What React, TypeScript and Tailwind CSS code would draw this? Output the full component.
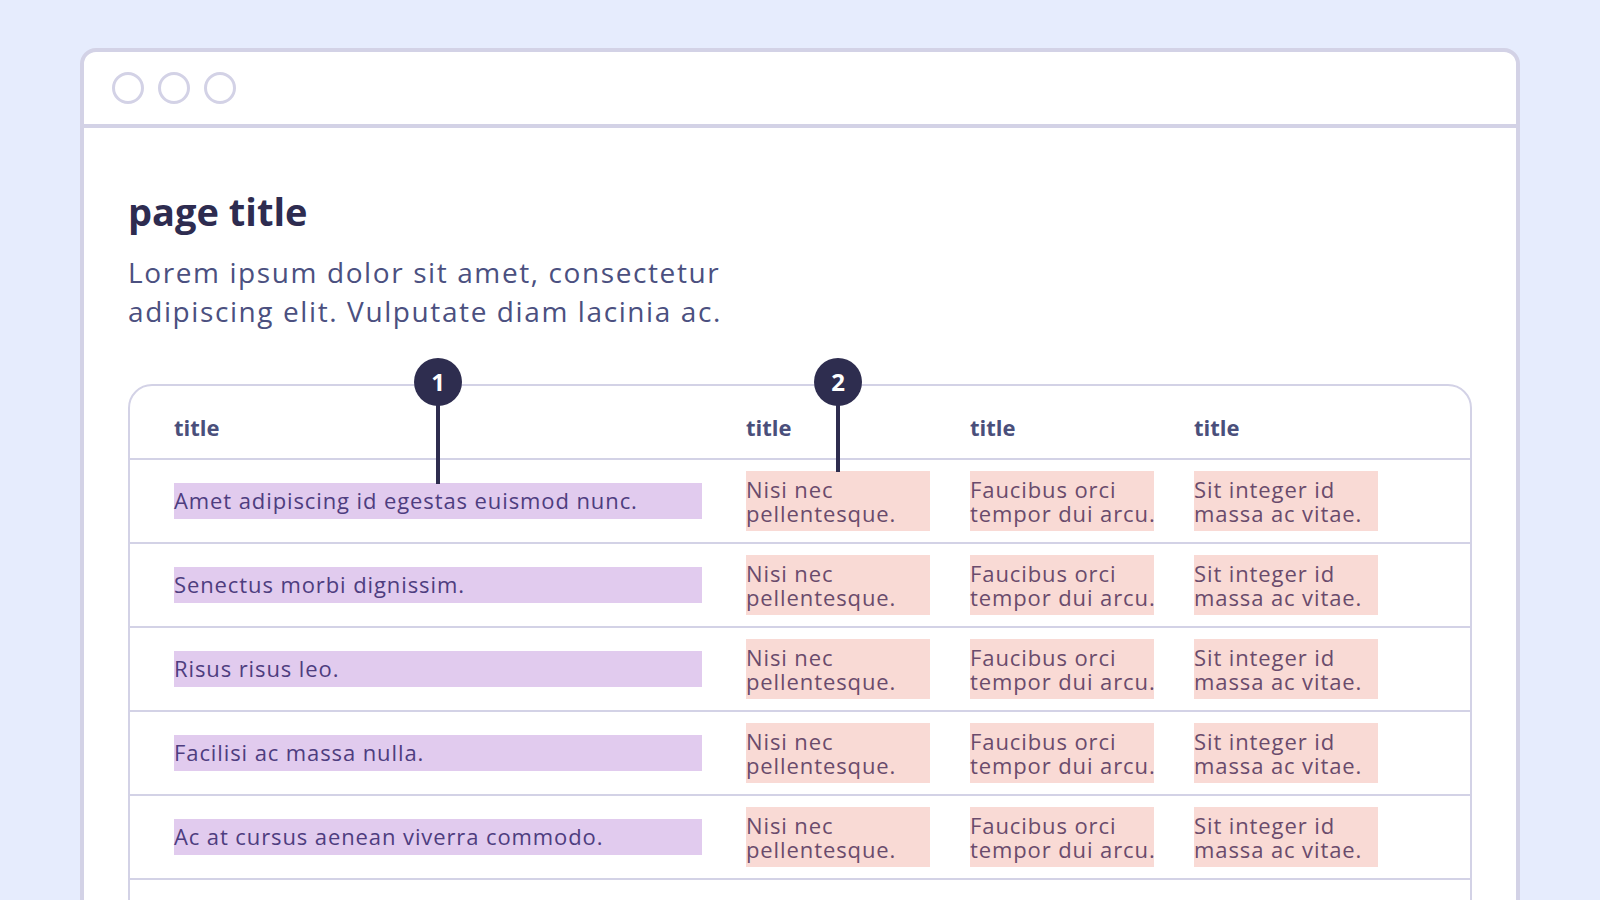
import React from "react";

const rows = [
  "Amet adipiscing id egestas euismod nunc.",
  "Senectus morbi dignissim.",
  "Risus risus leo.",
  "Facilisi ac massa nulla.",
  "Ac at cursus aenean viverra commodo.",
];

function Badge({ n, line }: { n: string; line: "long" | "short" }) {
  return (
    <div className="absolute left-1/2 -translate-x-1/2 top-[-28px] w-[48px] flex flex-col items-center z-10">
      <div className="w-[48px] h-[48px] rounded-full bg-[#2e2d4f] flex items-center justify-center text-white text-[24px] font-bold leading-none">
        {n}
      </div>
      <div
        className={
          line === "long"
            ? "w-[4px] h-[80px] bg-[#2e2d4f] -mt-[2px]"
            : "w-[4px] h-[68px] bg-[#2e2d4f] -mt-[2px]"
        }
      />
    </div>
  );
}

function PinkCell({ l1, l2 }: { l1: string; l2: string }) {
  return (
    <div className="w-[184px] h-[60px] bg-[#f9dad5] text-[#6a4b6c] text-[22px] leading-[24px] tracking-[0.9px] pt-[6px] whitespace-nowrap">
      <div>{l1}</div>
      <div>{l2}</div>
    </div>
  );
}

export default function App() {
  return (
    <div
      className="h-[900px] overflow-hidden bg-[#e6ecfd] pt-[48px] px-[80px]"
      style={{ fontFamily: "'Open Sans', Lato, sans-serif" }}
    >
      <div className="h-[900px] bg-white border-4 border-[#d3d2e6] rounded-t-[16px]">
        <div className="h-[76px] flex items-center pl-[28px] gap-[14px] border-b-4 border-[#d3d2e6]">
          <div className="w-[32px] h-[32px] rounded-full border-[3px] border-[#d3d2e6]" />
          <div className="w-[32px] h-[32px] rounded-full border-[3px] border-[#d3d2e6]" />
          <div className="w-[32px] h-[32px] rounded-full border-[3px] border-[#d3d2e6]" />
        </div>
        <div className="px-[44px] pt-[61px]">
          <h1 className="text-[38px] font-bold leading-[44px] text-[#2e2c50]">page title</h1>
          <p className="mt-[20px] text-[28px] leading-[39px] tracking-[1.6px] text-[#4b5080]">
            Lorem ipsum dolor sit amet, consectetur
            <br />
            adipiscing elit. Vulputate diam lacinia ac.
          </p>
          <div className="mt-[53px] border-2 border-[#d3d2e6] rounded-[24px]">
            <div className="grid grid-cols-[572px_224px_224px_1fr] pl-[44px] h-[74px] border-b-2 border-[#d3d2e6] text-[22px] font-bold text-[#4a4f7b]">
              <div className="relative w-[528px] h-full flex items-center pt-[11px]">
                <span>title</span>
                <Badge n="1" line="long" />
              </div>
              <div className="relative w-[184px] h-full flex items-center pt-[11px]">
                <span>title</span>
                <Badge n="2" line="short" />
              </div>
              <div className="h-full flex items-center pt-[11px]">title</div>
              <div className="h-full flex items-center pt-[11px]">title</div>
            </div>
            {rows.map((r, i) => (
              <div
                key={i}
                className="grid grid-cols-[572px_224px_224px_1fr] pl-[44px] h-[84px] items-center border-b-2 border-[#d3d2e6]"
              >
                <div className="w-[528px] h-[36px] bg-[#e1cbee] text-[#4e3d7f] text-[22px] leading-[34px] tracking-[0.9px] whitespace-nowrap">
                  {r}
                </div>
                <PinkCell l1="Nisi nec" l2="pellentesque." />
                <PinkCell l1="Faucibus orci" l2="tempor dui arcu." />
                <PinkCell l1="Sit integer id" l2="massa ac vitae." />
              </div>
            ))}
            <div className="h-[84px]" />
          </div>
        </div>
      </div>
    </div>
  );
}
